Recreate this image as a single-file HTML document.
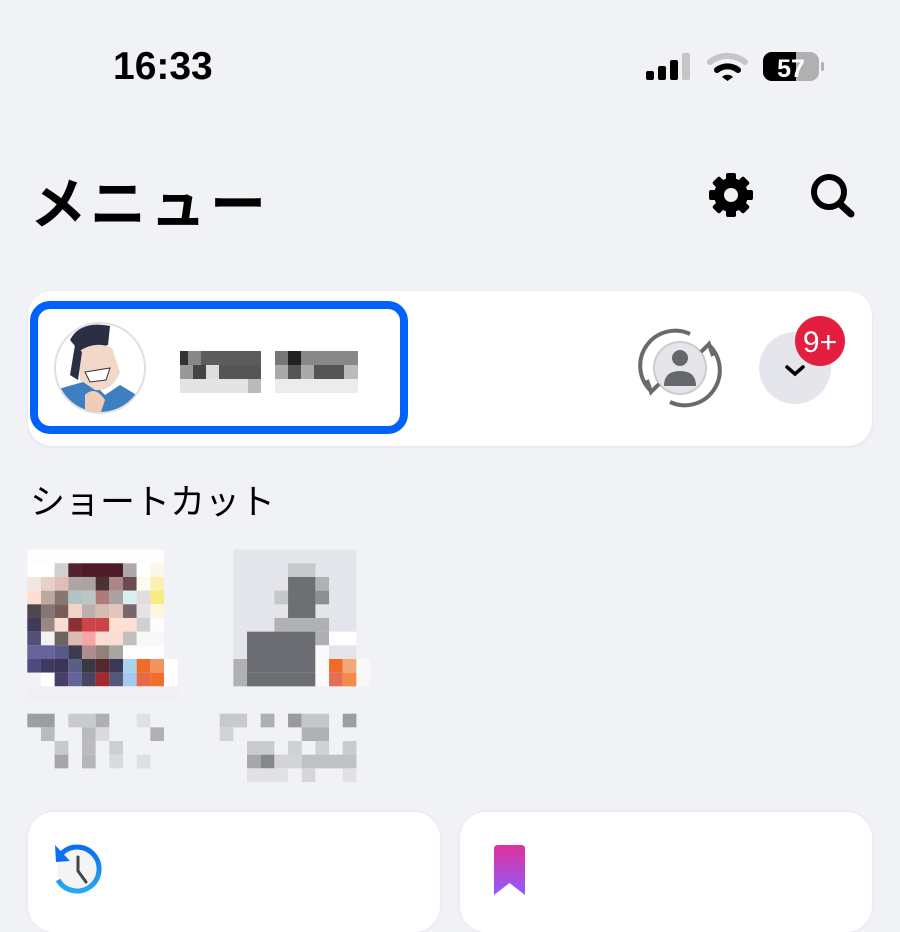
<!DOCTYPE html>
<html><head><meta charset="utf-8"><style>
body{margin:0;width:900px;height:900px;overflow:hidden;background:#f1f2f6;font-family:"Liberation Sans","Noto Sans CJK JP",sans-serif;position:relative}
.a{position:absolute}
</style></head><body>
<div class="a" style="left:113px;top:45px;font-size:39px;font-weight:bold;color:#000">16:33</div>
<svg class="a" style="left:0;top:0" width="900" height="900">
<rect x="646" y="71" width="8" height="9" rx="2"/>
<rect x="658" y="66" width="8" height="14" rx="2"/>
<rect x="670" y="60" width="8" height="20" rx="2"/>
<rect x="682" y="53" width="8" height="27" rx="2" fill="#c6c6c8"/>
<path d="M710 62 A28 28 0 0 1 745 62" stroke="#c6c6c8" stroke-width="6" fill="none" stroke-linecap="round"/>
<path d="M717 70 A17 17 0 0 1 738 70" stroke="#000" stroke-width="6" fill="none" stroke-linecap="round"/>
<path d="M722 77 L727.5 81 L733 77 A8 8 0 0 0 722 77Z" fill="#000"/>
<rect x="763" y="52" width="56" height="29" rx="9" fill="#b0b0b2"/>
<path d="M772 52 H796 V81 H772 A9 9 0 0 1 763 72 V61 A9 9 0 0 1 772 52Z" fill="#000"/>
<rect x="821" y="62" width="3" height="9" rx="1.5" fill="#b0b0b2"/>
<text x="791" y="77" font-size="25" font-weight="bold" fill="#fff" text-anchor="middle" font-family="Liberation Sans">57</text>
<g transform="translate(731,195)">
<g fill="#000">
<rect x="-5" y="-22" width="10" height="44" rx="2"/>
<rect x="-5" y="-22" width="10" height="44" rx="2" transform="rotate(45)"/>
<rect x="-5" y="-22" width="10" height="44" rx="2" transform="rotate(90)"/>
<rect x="-5" y="-22" width="10" height="44" rx="2" transform="rotate(135)"/>
<circle r="17"/></g>
<circle r="7" fill="#f1f2f6"/>
</g>
<circle cx="829" cy="192" r="15" stroke="#000" stroke-width="6" fill="none"/>
<line x1="840" y1="204" x2="851" y2="214" stroke="#000" stroke-width="7" stroke-linecap="round"/>
</svg>
<div class="a" style="left:30px;top:160px;font-size:56px;font-weight:bold;color:#000;letter-spacing:4px">メニュー</div>

<div class="a" style="left:28px;top:291px;width:844px;height:155px;background:#fff;border-radius:24px;box-shadow:0 1px 3px rgba(0,0,0,.08)"></div>
<div class="a" style="left:30px;top:301px;width:362px;height:117px;border:8px solid #0062fa;border-radius:20px"></div>
<svg class="a" style="left:0;top:0" width="900" height="900">
<circle cx="100" cy="368" r="45" fill="#fff" stroke="#e0e0e0" stroke-width="2"/>
<clipPath id="c"><circle cx="100" cy="368" r="44"/></clipPath>
<g clip-path="url(#c)">
<path d="M55 390 L90 380 L105 395 L120 385 L145 400 L145 420 L55 420Z" fill="#3d7fc0"/>
<path d="M70 340 Q80 320 110 326 L108 345 L80 352 Z" fill="#2a2f45"/>
<path d="M78 352 Q95 340 112 348 L120 372 Q112 392 95 390 L80 380Z" fill="#f2d8c8"/>
<path d="M85 372 L110 368 L106 380 L90 382Z" fill="#fff" stroke="#333"/>
<path d="M75 345 L82 352 L78 380 L70 375Z" fill="#2a2f45"/>
<path d="M85 395 Q95 385 105 400 L100 415 L85 410Z" fill="#f0cdb8"/>
</g>
<g>
<rect x="180" y="351" width="8" height="14" fill="#333"/><rect x="188" y="351" width="13" height="14" fill="#888"/><rect x="201" y="351" width="60" height="14" fill="#5c5c5c"/>
<rect x="180" y="365" width="13" height="14" fill="#999"/><rect x="193" y="365" width="13" height="14" fill="#444"/><rect x="206" y="365" width="13" height="14" fill="#ddd"/><rect x="219" y="365" width="42" height="14" fill="#555"/>
<rect x="180" y="379" width="81" height="14" fill="#e4e4e4"/><rect x="248" y="379" width="13" height="14" fill="#bbb"/>
<rect x="275" y="351" width="13" height="14" fill="#777"/><rect x="288" y="351" width="13" height="14" fill="#222"/><rect x="301" y="351" width="57" height="14" fill="#888"/>
<rect x="275" y="365" width="13" height="14" fill="#aaa"/><rect x="288" y="365" width="13" height="14" fill="#555"/><rect x="301" y="365" width="13" height="14" fill="#aaa"/><rect x="314" y="365" width="30" height="14" fill="#555"/><rect x="344" y="365" width="14" height="14" fill="#bbb"/>
<rect x="275" y="379" width="83" height="14" fill="#ececec"/>
</g>
<circle cx="680" cy="368" r="26" fill="#e4e6eb" stroke="#ccc" stroke-width="2"/>
<circle cx="680" cy="358" r="8" fill="#65676b"/>
<path d="M664 386 Q664 371 680 371 Q696 371 696 386 Z" fill="#65676b"/>
<path d="M650 390 A35 35 0 0 1 690 334" stroke="#6a6a6a" stroke-width="4" fill="none"/>
<path d="M710 346 A35 35 0 0 1 670 402" stroke="#6a6a6a" stroke-width="4" fill="none"/>
<path d="M647 380 L651 392 L659 384" stroke="#6a6a6a" stroke-width="4" fill="none"/>
<path d="M713 356 L709 344 L701 352" stroke="#6a6a6a" stroke-width="4" fill="none"/>
<circle cx="795" cy="368" r="36" fill="#e4e6eb"/>
<path d="M787 367 L795 374 L803 367" stroke="#000" stroke-width="3.5" fill="none" stroke-linecap="round"/>
<circle cx="820" cy="341" r="25" fill="#e41e3f"/>
<text x="820" y="352" font-size="30" fill="#fff" text-anchor="middle" font-family="Liberation Sans">9+</text>
</svg>
<div class="a" style="left:30px;top:474px;font-size:35px;color:#000">ショートカット</div>

<svg class="a" style="left:0;top:0" width="900" height="900">
<g transform="translate(27.3,563.3) scale(13.67)">
<rect x="0" y="-1" width="10" height="1" fill="#fdfdfd"/>
<rect x="0" y="0" width="1" height="1" fill="#fff"/><rect x="1" y="0" width="1" height="1" fill="#fff"/><rect x="2" y="0" width="1" height="1" fill="#d0d0d0"/><rect x="3" y="0" width="1" height="1" fill="#52232b"/><rect x="4" y="0" width="3" height="1" fill="#4d1a25"/><rect x="7" y="0" width="1" height="1" fill="#b0a8a8"/><rect x="8" y="0" width="1" height="1" fill="#fff"/><rect x="9" y="0" width="1" height="1" fill="#fcf8e8"/>
<rect x="0" y="1" width="1" height="1" fill="#f3e6e1"/><rect x="1" y="1" width="1" height="1" fill="#e8d2c6"/><rect x="2" y="1" width="1" height="1" fill="#e2bdb6"/><rect x="3" y="1" width="1" height="1" fill="#b0a3a3"/><rect x="4" y="1" width="1" height="1" fill="#a8a4a2"/><rect x="5" y="1" width="1" height="1" fill="#4a3233"/><rect x="6" y="1" width="1" height="1" fill="#a98784"/><rect x="7" y="1" width="1" height="1" fill="#6b4b51"/><rect x="8" y="1" width="1" height="1" fill="#fcfbf0"/><rect x="9" y="1" width="1" height="1" fill="#fbf0b0"/>
<rect x="0" y="2" width="1" height="1" fill="#fddfd2"/><rect x="1" y="2" width="1" height="1" fill="#bbaaa0"/><rect x="2" y="2" width="1" height="1" fill="#877672"/><rect x="3" y="2" width="1" height="1" fill="#aec5c3"/><rect x="4" y="2" width="1" height="1" fill="#bdc6c4"/><rect x="5" y="2" width="1" height="1" fill="#ae7b78"/><rect x="6" y="2" width="1" height="1" fill="#aba1a3"/><rect x="7" y="2" width="1" height="1" fill="#d8f0f0"/><rect x="8" y="2" width="1" height="1" fill="#e2dede"/><rect x="9" y="2" width="1" height="1" fill="#f9ea84"/>
<rect x="0" y="3" width="1" height="1" fill="#4f454d"/><rect x="1" y="3" width="1" height="1" fill="#857575"/><rect x="2" y="3" width="1" height="1" fill="#7a5a5a"/><rect x="3" y="3" width="1" height="1" fill="#f0d5c7"/><rect x="4" y="3" width="1" height="1" fill="#bdb0ac"/><rect x="5" y="3" width="1" height="1" fill="#d5bbb0"/><rect x="6" y="3" width="1" height="1" fill="#e2c5bb"/><rect x="7" y="3" width="1" height="1" fill="#7a6569"/><rect x="8" y="3" width="1" height="1" fill="#e5e3e3"/><rect x="9" y="3" width="1" height="1" fill="#fdf7e0"/>
<rect x="0" y="4" width="1" height="1" fill="#3d3a5a"/><rect x="1" y="4" width="1" height="1" fill="#998882"/><rect x="2" y="4" width="1" height="1" fill="#f9ddd3"/><rect x="3" y="4" width="1" height="1" fill="#8a3037"/><rect x="4" y="4" width="1" height="1" fill="#d04448"/><rect x="5" y="4" width="1" height="1" fill="#c94347"/><rect x="6" y="4" width="2" height="1" fill="#fddfd3"/><rect x="8" y="4" width="1" height="1" fill="#d0d0d0"/><rect x="9" y="4" width="1" height="1" fill="#fdfdfd"/>
<rect x="0" y="5" width="1" height="1" fill="#535078"/><rect x="1" y="5" width="1" height="1" fill="#f2f2f2"/><rect x="2" y="5" width="1" height="1" fill="#6c6262"/><rect x="3" y="5" width="1" height="1" fill="#dcbcb0"/><rect x="4" y="5" width="1" height="1" fill="#f6a5a6"/><rect x="5" y="5" width="2" height="1" fill="#fbddd2"/><rect x="7" y="5" width="1" height="1" fill="#c0c0bc"/><rect x="8" y="5" width="2" height="1" fill="#f8f8f8"/>
<rect x="0" y="6" width="2" height="1" fill="#66649a"/><rect x="2" y="6" width="1" height="1" fill="#5a5a8a"/><rect x="3" y="6" width="1" height="1" fill="#3f3a50"/><rect x="4" y="6" width="1" height="1" fill="#b08c90"/><rect x="5" y="6" width="1" height="1" fill="#938079"/><rect x="6" y="6" width="1" height="1" fill="#a8a5a2"/><rect x="7" y="6" width="3" height="1" fill="#fdfdfd"/>
<rect x="0" y="7" width="1" height="1" fill="#4f4b80"/><rect x="1" y="7" width="1" height="1" fill="#3f3a60"/><rect x="2" y="7" width="1" height="1" fill="#3a3558"/><rect x="3" y="7" width="1" height="1" fill="#585e86"/><rect x="4" y="7" width="1" height="1" fill="#3a3840"/><rect x="5" y="7" width="1" height="1" fill="#552830"/><rect x="6" y="7" width="1" height="1" fill="#3a3858"/><rect x="7" y="7" width="1" height="1" fill="#a8d4f0"/><rect x="8" y="7" width="1" height="1" fill="#f26a2a"/><rect x="9" y="7" width="1" height="1" fill="#f2945c"/><rect x="10" y="7" width="1" height="2" fill="#fff"/>
<rect x="0" y="8" width="1" height="1" fill="#f2f2f5"/><rect x="1" y="8" width="1" height="1" fill="#fff"/><rect x="2" y="8" width="1" height="1" fill="#453f6a"/><rect x="3" y="8" width="1" height="1" fill="#65649a"/><rect x="4" y="8" width="1" height="1" fill="#48455f"/><rect x="5" y="8" width="1" height="1" fill="#a3282f"/><rect x="6" y="8" width="1" height="1" fill="#545878"/><rect x="7" y="8" width="1" height="1" fill="#a5c8f0"/><rect x="8" y="8" width="1" height="1" fill="#e56a4a"/><rect x="9" y="8" width="1" height="1" fill="#f26e2a"/>
<rect x="0" y="9" width="11" height="1" fill="#f0f0f3"/>
<rect x="0" y="11" width="2" height="1" fill="#9d9ea2"/><rect x="3" y="11" width="2" height="1" fill="#c9cace"/><rect x="5" y="11" width="1" height="1" fill="#aeafb3"/><rect x="8" y="11" width="1" height="1" fill="#dfe0e4"/>
<rect x="1" y="12" width="1" height="1" fill="#b9babe"/><rect x="4" y="12" width="1" height="1" fill="#b9babe"/><rect x="5" y="12" width="1" height="1" fill="#d9dade"/><rect x="9" y="12" width="1" height="1" fill="#b0b1b5"/>
<rect x="2" y="13" width="1" height="1" fill="#c8c9cd"/><rect x="4" y="13" width="1" height="1" fill="#bbbcc0"/><rect x="6" y="13" width="1" height="1" fill="#cdced2"/>
<rect x="2" y="14" width="1" height="1" fill="#a5a6aa"/><rect x="4" y="14" width="1" height="1" fill="#b5b6ba"/><rect x="6" y="14" width="1" height="1" fill="#d9dade"/><rect x="8" y="14" width="1" height="1" fill="#dedfe3"/>
</g>
<g transform="translate(219.7,563.3) scale(13.67)">
<rect x="1" y="-1" width="9" height="8" fill="#e4e5ea"/>
<rect x="5" y="0" width="2" height="1" fill="#c8c9cd"/>
<rect x="5" y="1" width="2" height="3" fill="#6e6f73"/><rect x="7" y="1" width="1" height="1" fill="#b0b1b5"/><rect x="7" y="2" width="1" height="1" fill="#8e8f93"/><rect x="4" y="2" width="1" height="1" fill="#c6c7cb"/>
<rect x="4" y="4" width="4" height="1" fill="#b0b1b5"/>
<rect x="2" y="5" width="5" height="3" fill="#6c6d72"/><rect x="7" y="5" width="1" height="1" fill="#aeafb3"/>
<rect x="1" y="7" width="1" height="2" fill="#b0b1b5"/><rect x="2" y="8" width="5" height="1" fill="#6c6d72"/>
<rect x="7" y="6" width="1" height="3" fill="#fafafa"/><rect x="8" y="5" width="2" height="1" fill="#fff"/>
<rect x="8" y="7" width="1" height="1" fill="#f26a2a"/><rect x="9" y="7" width="1" height="1" fill="#f4a878"/><rect x="8" y="8" width="1" height="1" fill="#e56e55"/><rect x="9" y="8" width="1" height="1" fill="#f48c48"/>
<rect x="10" y="7" width="1" height="2" fill="#f8f8f8"/>
<rect x="0" y="11" width="2" height="1" fill="#c8c9cd"/><rect x="3" y="11" width="1" height="1" fill="#aeafb3"/><rect x="5" y="11" width="1" height="1" fill="#9a9b9f"/><rect x="6" y="11" width="2" height="1" fill="#c6c7cb"/><rect x="9" y="11" width="1" height="1" fill="#9d9ea2"/>
<rect x="0" y="12" width="1" height="1" fill="#d2d3d7"/><rect x="6" y="12" width="2" height="1" fill="#b0b1b5"/>
<rect x="2" y="13" width="2" height="1" fill="#cacbcf"/><rect x="5" y="13" width="1" height="1" fill="#d0d1d5"/><rect x="7" y="13" width="1" height="1" fill="#d0d1d5"/><rect x="9" y="13" width="1" height="1" fill="#cacbcf"/>
<rect x="2" y="14" width="1" height="1" fill="#a6a7ab"/><rect x="3" y="14" width="1" height="1" fill="#86878b"/><rect x="4" y="14" width="2" height="1" fill="#d3d4d8"/><rect x="6" y="14" width="4" height="1" fill="#c0c1c5"/>
<rect x="2" y="15" width="3" height="1" fill="#e0e1e5"/><rect x="6" y="15" width="1" height="1" fill="#d6d7db"/><rect x="9" y="15" width="1" height="1" fill="#e0e1e5"/>
</g>
</svg>

<div class="a" style="left:28px;top:812px;width:412px;height:120px;background:#fff;border-radius:26px;box-shadow:0 0 4px rgba(0,0,0,.06)"></div>
<div class="a" style="left:460px;top:812px;width:412px;height:120px;background:#fff;border-radius:26px;box-shadow:0 0 4px rgba(0,0,0,.06)"></div>
<svg class="a" style="left:0;top:0" width="900" height="900">
<defs>
<linearGradient id="bg" x1="0" y1="0" x2="0" y2="1"><stop offset="0" stop-color="#e0309a"/><stop offset="1" stop-color="#8e5cff"/></linearGradient>
<linearGradient id="cg" x1="0" y1="0" x2="0" y2="1"><stop offset="0" stop-color="#0a6ef0"/><stop offset="1" stop-color="#2aa8f0"/></linearGradient>
</defs>
<circle cx="78" cy="870" r="21" fill="#f3f4f6"/>
<path d="M62 853 A22 22 0 1 1 58 880" stroke="url(#cg)" stroke-width="5" fill="none"/>
<path d="M55 845 L56 862 L70 861Z" fill="#0a6ef0"/>
<path d="M78 857 V871 L86 882" stroke="#444" stroke-width="3" fill="none" stroke-linecap="round"/>
<path d="M494 849 Q494 845 498 845 H521 Q525 845 525 849 V895 L509.5 883 L494 895Z" fill="url(#bg)"/>
</svg>
</body></html>
